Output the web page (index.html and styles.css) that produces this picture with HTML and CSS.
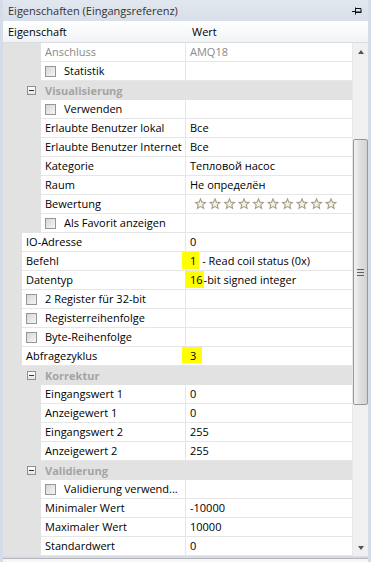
FILE: index.html
```html
<!DOCTYPE html>
<html lang="de">
<head>
    <meta charset="UTF-8">
    <title>Eigenschaften</title>
    <link rel="stylesheet" href="styles.css">
</head>
<body>
    <div class="window">
        <div class="titlebar">
            <span class="title">Eigenschaften (Eingangsreferenz)</span>
            <svg class="pin" width="10" height="8" viewBox="0 0 10 8">
                <path d="M0 4.5H3M3.5 0.5V7.5M4 1.5H9V5.5H4M4 5H9.5" stroke="#111" stroke-width="1" fill="none"/>
            </svg>
        </div>
        <div class="header">
            <div class="hname">Eigenschaft</div>
            <div class="hvalue">Wert</div>
        </div>
        <div class="body">
            <div class="rows">
                <div class="row sub readonly"><div class="name">Anschluss</div><div class="value">AMQ18</div></div>
                <div class="row sub"><div class="name"><span class="check"></span>Statistik</div><div class="value"></div></div>
                <div class="row group"><span class="toggle"></span>Visualisierung</div>
                <div class="row sub"><div class="name"><span class="check"></span>Verwenden</div><div class="value"></div></div>
                <div class="row sub"><div class="name">Erlaubte Benutzer lokal</div><div class="value">Все</div></div>
                <div class="row sub"><div class="name">Erlaubte Benutzer Internet</div><div class="value">Все</div></div>
                <div class="row sub"><div class="name">Kategorie</div><div class="value">Тепловой насос</div></div>
                <div class="row sub"><div class="name">Raum</div><div class="value">Не определён</div></div>
                <div class="row sub"><div class="name">Bewertung</div><div class="value">
                    <svg class="stars" width="147" height="14" viewBox="0 0 147 14">
                        <defs>
                            <g id="star">
                                <polygon points="6.5,0.6 8.3,4.7 12.7,5.1 9.4,8 10.4,12.4 6.5,10.1 2.6,12.4 3.6,8 0.3,5.1 4.7,4.7" fill="#a39b86"/>
                                <polygon points="6.5,3.2 7.6,5.7 10.2,5.9 8.2,7.7 8.8,10.3 6.5,8.9 4.2,10.3 4.8,7.7 2.8,5.9 5.4,5.7" fill="#f2f0e8"/>
                            </g>
                        </defs>
                        <use href="#star" x="0"/>
                        <use href="#star" x="14.5"/>
                        <use href="#star" x="29"/>
                        <use href="#star" x="43.5"/>
                        <use href="#star" x="58"/>
                        <use href="#star" x="72.5"/>
                        <use href="#star" x="87"/>
                        <use href="#star" x="101.5"/>
                        <use href="#star" x="116"/>
                        <use href="#star" x="130.5"/>
                    </svg>
                </div></div>
                <div class="row sub"><div class="name"><span class="check"></span>Als Favorit anzeigen</div><div class="value"></div></div>
                <div class="row top"><div class="name">IO-Adresse</div><div class="value">0</div></div>
                <div class="row top"><div class="name">Befehl</div><div class="value"><span class="mark mark-one">1</span>&nbsp;- Read coil status (0x)</div></div>
                <div class="row top"><div class="name">Datentyp</div><div class="value"><span class="mark mark-sixteen">16</span>-bit signed integer</div></div>
                <div class="row top"><div class="name"><span class="check"></span>2 Register für 32-bit</div><div class="value"></div></div>
                <div class="row top"><div class="name"><span class="check"></span>Registerreihenfolge</div><div class="value"></div></div>
                <div class="row top"><div class="name"><span class="check"></span>Byte-Reihenfolge</div><div class="value"></div></div>
                <div class="row top"><div class="name">Abfragezyklus</div><div class="value"><span class="mark mark-three">3</span></div></div>
                <div class="row group"><span class="toggle"></span>Korrektur</div>
                <div class="row sub"><div class="name">Eingangswert 1</div><div class="value">0</div></div>
                <div class="row sub"><div class="name">Anzeigewert 1</div><div class="value">0</div></div>
                <div class="row sub"><div class="name">Eingangswert 2</div><div class="value">255</div></div>
                <div class="row sub"><div class="name">Anzeigewert 2</div><div class="value">255</div></div>
                <div class="row group"><span class="toggle"></span>Validierung</div>
                <div class="row sub"><div class="name"><span class="check"></span>Validierung verwend...</div><div class="value"></div></div>
                <div class="row sub"><div class="name">Minimaler Wert</div><div class="value">-10000</div></div>
                <div class="row sub"><div class="name">Maximaler Wert</div><div class="value">10000</div></div>
                <div class="row sub"><div class="name">Standardwert</div><div class="value">0</div></div>
            </div>
            <div class="scrollbar">
                <div class="arrow"><span class="tri up"></span></div>
                <div class="thumb"><span class="grip"></span></div>
                <div class="spacer"></div>
                <div class="arrow"><span class="tri down"></span></div>
            </div>
        </div>
        <div class="footer"><div class="desc"></div></div>
    </div>
</body>
</html>
```

FILE: styles.css
```css
body,
html {
    margin: 0;
    padding: 0;
    background-color: #d6dbe8;
    font-family: "Open Sans", "Noto Sans", sans-serif;
    font-size: 11px;
    color: #000;
}

.window {
    width: 371px;
    height: 562px;
    padding: 0 3px;
    box-sizing: border-box;
    display: flex;
    flex-direction: column;
}

.titlebar {
    height: 21px;
    flex: none;
    display: flex;
    align-items: center;
    justify-content: space-between;
    padding: 0 6px 0 5px;
    background: linear-gradient(#e2e7ef, #d8dfe9);
    color: #333;
}

.pin {
    display: block;
}

.header {
    height: 22px;
    flex: none;
    display: flex;
    box-sizing: border-box;
    border-bottom: 1px solid #d8dce3;
    background: linear-gradient(#ffffff, #f1f3f6);
    line-height: 21px;
}

.hname {
    width: 183px;
    padding-left: 5px;
    box-sizing: border-box;
}

.hvalue {
    padding-left: 6px;
}

.body {
    height: 513px;
    flex: none;
    display: flex;
}

.rows {
    flex: 1;
    background-color: #e2e2e2;
}

.row {
    height: 19px;
    display: grid;
    grid-template-columns: 183px 1fr;
    line-height: 18px;
    white-space: nowrap;
}

.name,
.value {
    background-color: #fff;
    border-bottom: 1px solid #e6e6e6;
    display: flex;
    align-items: center;
    padding-left: 4px;
}

.name {
    border-right: 1px solid #e6e6e6;
    overflow: hidden;
}

.row.top .name {
    margin-left: 19px;
}

.row.sub .name {
    margin-left: 38px;
}

.readonly .name,
.readonly .value {
    color: #8a8a8a;
}

.row.group {
    display: flex;
    align-items: center;
    padding-left: 24px;
    font-weight: bold;
    color: #a4a4a4;
}

.toggle {
    width: 9px;
    height: 9px;
    box-sizing: border-box;
    border: 1px solid #8f8f8f;
    background: linear-gradient(#ffffff, #e4e4e4);
    margin-right: 9px;
    display: flex;
    align-items: center;
    justify-content: center;
}

.toggle::before {
    content: "";
    width: 5px;
    height: 1px;
    background-color: #333;
}

.check {
    width: 11px;
    height: 11px;
    flex: none;
    box-sizing: border-box;
    border: 1px solid #969696;
    background: linear-gradient(135deg, #d6d6d6, #f6f6f6);
    margin-right: 8px;
}

.stars {
    display: block;
    margin-left: 4px;
}

.mark {
    background-color: #ffff00;
    height: 17px;
    align-self: flex-start;
    line-height: 17px;
}

.mark-one {
    margin-left: -8px;
    padding: 0 3px 0 8px;
}

.mark-sixteen {
    margin-left: -5px;
    padding: 0 1px 0 5px;
}

.mark-three {
    margin-left: -8px;
    padding: 0 6px 0 8px;
    height: 16px;
}

.scrollbar {
    width: 16px;
    flex: none;
    display: flex;
    flex-direction: column;
    align-items: center;
    background-color: #f0f0f0;
    border-left: 1px solid #e8e8e8;
    box-sizing: border-box;
}

.arrow {
    height: 17px;
    flex: none;
    display: flex;
    align-items: center;
    justify-content: center;
}

.tri {
    width: 0;
    height: 0;
    border-left: 3px solid transparent;
    border-right: 3px solid transparent;
}

.tri.up {
    border-bottom: 4px solid #555;
}

.tri.down {
    border-top: 4px solid #555;
}

.thumb {
    margin-top: 79px;
    width: 15px;
    height: 266px;
    flex: none;
    box-sizing: border-box;
    border: 1px solid #979797;
    border-radius: 2px;
    background: linear-gradient(to right, #f2f2f2, #e0e0e0 45%, #d2d2d2);
    display: flex;
    align-items: center;
    justify-content: center;
}

.grip {
    width: 7px;
    height: 7px;
    background: repeating-linear-gradient(#5f5f5f 0, #5f5f5f 1px, transparent 1px, transparent 3px);
}

.spacer {
    flex: 1;
}

.footer {
    flex: 1;
    padding-top: 2px;
}

.desc {
    height: 100%;
    border-top: 1px solid #b5b5b5;
    background-color: #f6f6f6;
}
```
